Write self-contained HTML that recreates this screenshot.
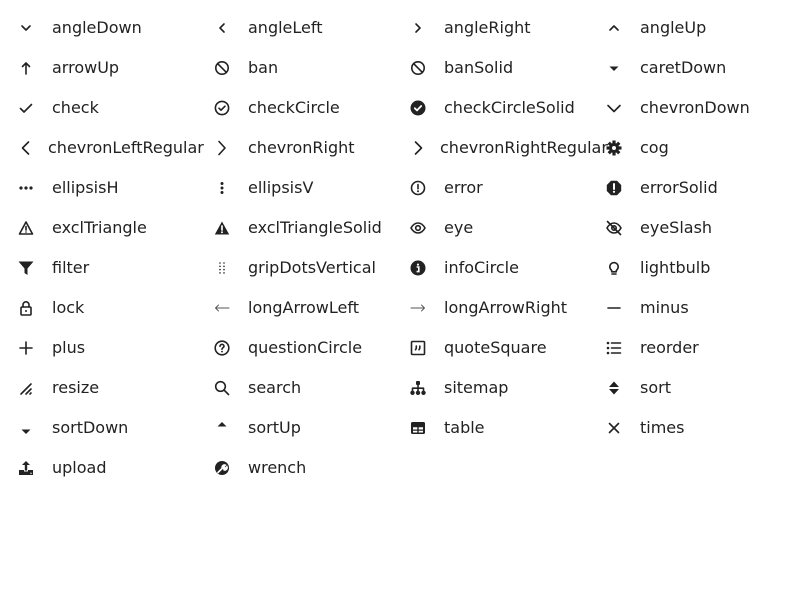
<!DOCTYPE html>
<html><head><meta charset="utf-8"><style>
body{margin:0;width:800px;height:600px;background:#fff;font-family:"DejaVu Sans","Liberation Sans",sans-serif;font-size:16px;color:#222;position:relative;overflow:hidden}
.it{position:absolute;height:40px;line-height:40px;white-space:nowrap}
.it svg{position:absolute;left:2px;top:12px;width:16px;height:16px}
.it span{position:absolute;left:36px;top:0}
svg .s{fill:none;stroke:#222;stroke-width:1.6;stroke-linecap:round;stroke-linejoin:round}
svg .f{fill:#222}
</style></head><body>
<div id="g"></div>
<script>
const S='class="s"',F='class="f"';
const I={
angleDown:`<path ${S} d="M4 6l4 4 4-4" stroke-width="2"/>`,
angleLeft:`<path ${S} d="M10 4L6 8l4 4" stroke-width="2"/>`,
angleRight:`<path ${S} d="M6 4l4 4-4 4" stroke-width="2"/>`,
angleUp:`<path ${S} d="M4 10l4-4 4 4" stroke-width="2"/>`,
arrowUp:`<path ${S} d="M8 14V3M4.5 6.5L8 3l3.5 3.5"/>`,
ban:`<circle ${S} cx="8" cy="8" r="6.2" stroke-width="1.8"/><path ${S} d="M3.7 3.7l8.6 8.6" stroke-width="1.8"/>`,
banSolid:`<circle ${S} cx="8" cy="8" r="6.2" stroke-width="1.8"/><path ${S} d="M3.7 3.7l8.6 8.6" stroke-width="1.8"/>`,
caretDown:`<path ${F} d="M3.5 6.5h9L8 11z"/>`,
check:`<path ${S} d="M2.5 8.5l3.5 3.5 7.5-7.5" stroke-width="1.8"/>`,
checkCircle:`<circle ${S} cx="8" cy="8" r="6.6" stroke-width="1.4"/><path ${S} d="M5 8.2l2 2 4-4" stroke-width="1.4"/>`,
checkCircleSolid:`<circle ${F} cx="8" cy="8" r="7.5"/><path d="M4.8 8.2l2.2 2.2 4.2-4.4" fill="none" stroke="#fff" stroke-width="1.8" stroke-linecap="round" stroke-linejoin="round"/>`,
chevronDown:`<path ${S} d="M2 5.5l6 6 6-6" stroke-width="1.8"/>`,
chevronLeftRegular:`<path ${S} d="M10.5 2L4.5 8l6 6" stroke-width="2"/>`,
chevronRight:`<path ${S} d="M5 1.5L11 8l-6 6.5" stroke-width="1.1"/>`,
chevronRightRegular:`<path ${S} d="M5.5 2l6 6-6 6" stroke-width="2"/>`,
cog:`<g transform="translate(8 8)"><circle ${F} r="5"/>${[0,45,90,135,180,225,270,315].map(a=>`<rect ${F} x="-1.6" y="-7.5" width="3.2" height="4" transform="rotate(${a})"/>`).join('')}<circle r="2" fill="#fff"/></g>`,
ellipsisH:`<circle ${F} cx="3" cy="8" r="1.6"/><circle ${F} cx="8" cy="8" r="1.6"/><circle ${F} cx="13" cy="8" r="1.6"/>`,
ellipsisV:`<circle ${F} cx="8" cy="3.5" r="1.5"/><circle ${F} cx="8" cy="8" r="1.5"/><circle ${F} cx="8" cy="12.5" r="1.5"/>`,
error:`<circle ${S} cx="8" cy="8" r="6.5" stroke-width="1.5"/><path ${S} d="M8 4.5v4.2" stroke-width="1.8"/><circle ${F} cx="8" cy="11.3" r="1"/>`,
errorSolid:`<path ${F} d="M5 .8h6L15.2 5v6L11 15.2H5L.8 11V5z"/><path d="M8 4v5" stroke="#fff" stroke-width="2" stroke-linecap="round"/><circle cx="8" cy="11.8" r="1.1" fill="#fff"/>`,
exclTriangle:`<path ${S} d="M8 2L1.5 14h13z" stroke-width="1.4"/><path ${S} d="M8 6.5v3.5" stroke-width="1.4"/><circle ${F} cx="8" cy="12" r=".8"/>`,
exclTriangleSolid:`<path ${F} d="M8 1.5L.8 14.5h14.4z"/><path d="M8 6v4" stroke="#fff" stroke-width="1.7" stroke-linecap="round"/><circle cx="8" cy="12.3" r="1" fill="#fff"/>`,
eye:`<path ${S} d="M1 8c2-3.5 4.5-5 7-5s5 1.5 7 5c-2 3.5-4.5 5-7 5S3 11.5 1 8z" stroke-width="1.5"/><circle ${S} cx="8" cy="8" r="2.3" stroke-width="1.6"/>`,
eyeSlash:`<path ${S} d="M1 8c2-3.5 4.5-5 7-5s5 1.5 7 5c-2 3.5-4.5 5-7 5S3 11.5 1 8z" stroke-width="1.4"/><circle ${S} cx="8" cy="8" r="2.2" stroke-width="1.4"/><path ${S} d="M1.5 1.5l13 13" stroke-width="1.4"/>`,
filter:`<path ${F} d="M.5 1.5h15L9.5 8.5V15l-3-2V8.5z"/>`,
gripDotsVertical:`${[3,6.3,9.6,12.9].map(y=>`<circle ${F} cx="6" cy="${y}" r=".8"/><circle ${F} cx="10" cy="${y}" r=".8"/>`).join('')}`,
infoCircle:`<circle ${F} cx="8" cy="8" r="7.5"/><circle cx="8" cy="4.6" r="1.1" fill="#fff"/><path d="M6.6 7h2.2v4.5M6.6 11.6h3" stroke="#fff" stroke-width="1.6" fill="none"/>`,
lightbulb:`<path ${S} d="M5.7 10.5C4.5 9.5 3.8 8.3 3.8 6.8a4.2 4.2 0 018.4 0c0 1.5-.7 2.7-1.9 3.7v1.3H5.7z" stroke-width="1.4"/><path ${S} d="M6 14h4" stroke-width="1.6"/>`,
lock:`<rect ${S} x="3" y="7" width="10" height="8" rx="1" stroke-width="1.4"/><path ${S} d="M5 7V4.8a3 3 0 016 0V7" stroke-width="1.4"/><circle ${F} cx="8" cy="11" r="1"/>`,
longArrowLeft:`<path d="M15 8H1.5M4.5 5L1.5 8l3 3" fill="none" stroke="#555" stroke-width=".9" stroke-linecap="round" stroke-linejoin="round"/>`,
longArrowRight:`<path d="M1 8h13.5M11.5 5l3 3-3 3" fill="none" stroke="#555" stroke-width=".9" stroke-linecap="round" stroke-linejoin="round"/>`,
minus:`<path ${S} d="M2 8h12" stroke-width="2"/>`,
plus:`<path ${S} d="M8 2v12M2 8h12" stroke-width="1.8"/>`,
questionCircle:`<circle ${S} cx="8" cy="8" r="6.8" stroke-width="1.4"/><path ${S} d="M6 6.3a2 2 0 114 0c0 1.3-2 1.5-2 3" stroke-width="1.5"/><circle ${F} cx="8" cy="11.6" r=".9"/>`,
quoteSquare:`<rect ${S} x="1.5" y="1.5" width="13" height="13" rx="1" stroke-width="1.4"/><path ${S} d="M6.3 6v2.2l-.8 1.5M9.8 6v2.2l-.8 1.5" stroke-width="1.5"/>`,
reorder:`<circle ${F} cx="2" cy="3" r="1.3"/><circle ${F} cx="2" cy="8" r="1.3"/><circle ${F} cx="2" cy="13" r="1.3"/><path ${S} d="M5.5 3h9M5.5 8h9M5.5 13h9" stroke-width="1.5" stroke-linecap="butt"/>`,
resize:`<path ${S} d="M3 14L13 4M8 14l5-5M12 14l1-1" stroke-width="1.5"/>`,
search:`<circle ${S} cx="6.5" cy="6.5" r="4.8" stroke-width="2.2"/><path ${S} d="M10 10l4.5 4.5" stroke-width="2.6"/>`,
sitemap:`<rect ${F} x="6" y="1" width="4" height="4" rx="1"/><path ${S} d="M8 5v3M2.5 11V8.2h11V11M8 8v3" stroke-width="1.3"/><circle ${F} cx="2.5" cy="12.8" r="2.2"/><circle ${F} cx="8" cy="12.8" r="2.2"/><circle ${F} cx="13.5" cy="12.8" r="2.2"/>`,
sort:`<path ${F} d="M3 7h10L8 1.5zM3 9h10l-5 5.5z"/>`,
sortDown:`<path ${F} d="M3.5 9.5h9L8 14z"/>`,
sortUp:`<path ${F} d="M3.5 6.5h9L8 2z"/>`,
table:`<rect ${F} x="1" y="2" width="14" height="12" rx="1.5"/><path d="M3 7.3h4.3v2.2H3zM8.7 7.3H13v2.2H8.7zM3 10.8h4.3v1.7H3zM8.7 10.8H13v1.7H8.7z" fill="#fff"/>`,
times:`<path ${S} d="M3.5 3.5l9 9M12.5 3.5l-9 9" stroke-width="1.8"/>`,
upload:`<path ${F} d="M1 10h5v1.5h4V10h5v5H1z"/><path ${F} d="M8 1l4 4H9.2v5.5H6.8V5H4z"/><circle cx="13" cy="13.3" r=".7" fill="#fff"/>`,
wrench:`<path ${F} d="M8 1a7 7 0 100 14A7 7 0 108 1z"/><path d="M4 12.5l4-4M8.3 8.2a2.3 2.3 0 013-3L10 6.5l.3 1.3 1.3.3 1.3-1.3a2.3 2.3 0 01-3 3" stroke="#fff" stroke-width="1.6" fill="#fff" stroke-linecap="round"/>`
};
const names=["angleDown","angleLeft","angleRight","angleUp","arrowUp","ban","banSolid","caretDown","check","checkCircle","checkCircleSolid","chevronDown","chevronLeftRegular","chevronRight","chevronRightRegular","cog","ellipsisH","ellipsisV","error","errorSolid","exclTriangle","exclTriangleSolid","eye","eyeSlash","filter","gripDotsVertical","infoCircle","lightbulb","lock","longArrowLeft","longArrowRight","minus","plus","questionCircle","quoteSquare","reorder","resize","search","sitemap","sort","sortDown","sortUp","table","times","upload","wrench"];
let h='';
names.forEach((n,i)=>{const c=i%4,r=Math.floor(i/4);const x=16+c*196,y=8+r*40;
const tl=(n==="chevronLeftRegular"||n==="chevronRightRegular")?32:36;
h+=`<div class="it" style="left:${x}px;top:${y}px"><svg viewBox="0 0 16 16">${I[n]}</svg><span style="left:${tl}px">${n}</span></div>`;});
document.getElementById('g').innerHTML=h;
</script>
</body></html>
